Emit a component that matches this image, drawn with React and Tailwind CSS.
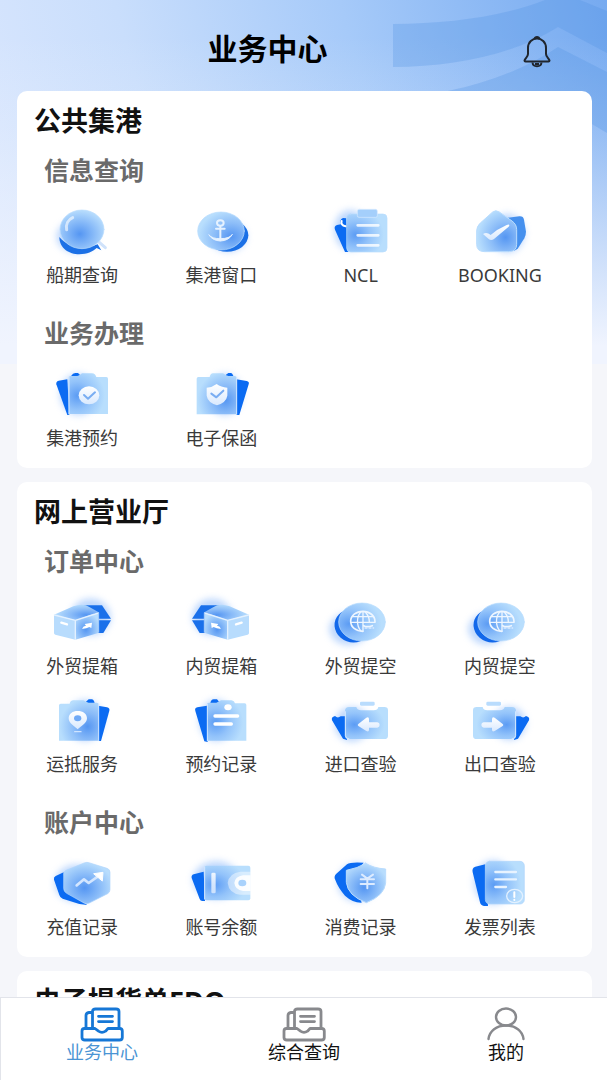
import React from "react";

const DARK = "#0b6bf2";

function Defs() {
  return (
    <svg className="absolute h-0 w-0" aria-hidden="true">
      <defs>
        <radialGradient id="gC" cx="0.45" cy="0.62" r="0.62">
          <stop offset="0" stopColor="#5596f2" />
          <stop offset="0.5" stopColor="#86b9f8" />
          <stop offset="1" stopColor="#b8ddfd" />
        </radialGradient>
        <radialGradient id="gL" cx="0.22" cy="0.55" r="0.7">
          <stop offset="0" stopColor="#5c9cf4" />
          <stop offset="0.5" stopColor="#93c3fa" />
          <stop offset="1" stopColor="#b8defd" />
        </radialGradient>
        <radialGradient id="gR" cx="0.72" cy="0.65" r="0.7">
          <stop offset="0" stopColor="#5596f2" />
          <stop offset="0.5" stopColor="#8bbcf8" />
          <stop offset="1" stopColor="#b8defd" />
        </radialGradient>
        <linearGradient id="gW" x1="0" y1="0" x2="0" y2="1">
          <stop offset="0" stopColor="#ffffff" />
          <stop offset="1" stopColor="#d9e9fe" />
        </linearGradient>
        <filter id="blur" x="-50%" y="-50%" width="200%" height="200%">
          <feGaussianBlur stdDeviation="11" />
        </filter>
      </defs>
    </svg>
  );
}

function Art({ box, glow, children }) {
  return (
    <svg viewBox={box} className="h-16 w-20" fill="none" strokeLinecap="round" strokeLinejoin="round" aria-hidden="true">
      <ellipse cx={glow[0]} cy={glow[1]} rx={glow[2]} ry={glow[3]} fill="#7db0fb" opacity="0.5" filter="url(#blur)" />
      {children}
    </svg>
  );
}

const EDGE = "#d3e8ff";

const Search = () => (
  <Art box="36 15 240 192" glow={[140, 125, 60, 48]}>
    <path d="M88 126C88 160 118 178 148 178C172 177 188 170 200 159L214 166L203 148C160 165 110 155 88 126Z" fill="#1b70e6" />
    <path d="M202 137L226 158" stroke="#cfe2fb" strokeWidth="9" />
    <ellipse cx="156" cy="103" rx="66" ry="58" fill="url(#gC)" stroke="#b9dcfe" strokeWidth="2" />
    <path d="M110 104C107 88 114 74 128 68" stroke="#fff" strokeOpacity="0.6" strokeWidth="9" />
  </Art>
);

const Anchor = () => (
  <Art box="454 15 240 192" glow={[595, 125, 55, 45]}>
    <ellipse cx="592" cy="121" rx="64" ry="49" fill="#1b70e6" />
    <ellipse cx="574" cy="108" rx="70" ry="57" fill="url(#gR)" stroke="#b9dcfe" strokeWidth="2" />
    <g stroke="#e6f2ff" strokeWidth="6">
      <ellipse cx="572" cy="84" rx="10" ry="8" />
      <path d="M572 93V136M559 101H585" />
      <path d="M538 120Q548 137 572 138Q598 137 608 118Q600 131 572 131Q548 132 538 120Z" fill="#e6f2ff" strokeWidth="3" />
    </g>
  </Art>
);

const Clipboard = () => (
  <Art box="32 15 240 192" glow={[120, 105, 48, 60]}>
    <path d="M74 104Q70 94 80 90L92 88Q86 74 98 69L108 70L114 171H104Z" fill={DARK} />
    <path d="M94 78Q90 90 106 94" stroke="#fff" strokeWidth="6" />
    <rect x="109" y="57" width="121" height="114" rx="12" fill="url(#gL)" stroke="#b9dcfe" strokeWidth="2" />
    <rect x="141" y="43" width="60" height="24" rx="5" fill="#a4cffb" stroke="#d9ecff" strokeWidth="2" />
    <path d="M142 91H204M142 121H204M142 151H204" stroke="#fff" strokeOpacity="0.8" strokeWidth="8" />
  </Art>
);

const House = () => (
  <Art box="450 15 240 192" glow={[592, 115, 52, 58]}>
    <path d="M594 68L628 64Q640 63 642 74L648 110Q648 120 643 130L624 160Q616 169 600 169Z" fill="#4590ee" />
    <path d="M548 51Q557 43 568 51L606 78Q620 88 620 104V148Q620 170 596 170H524Q500 170 500 148V108Q500 94 510 85Z" fill="url(#gR)" stroke="#b9dcfe" strokeWidth="3" />
    <path d="M519 117Q530 110 542 120Q562 102 590 90Q602 86 596 95L552 132Q543 139 535 131Z" fill="url(#gW)" />
  </Art>
);

const Reserve = () => (
  <Art box="36 24 240 192" glow={[145, 118, 55, 62]}>
    <path d="M79 88Q77 80 86 77L112 73L118 180H112Z" fill={DARK} />
    <path d="M124 62Q128 54 136 54H144L150 60L144 68H124Z" fill={DARK} />
    <path d="M116 68Q116 63 122 63H142Q150 61 156 55H186Q196 56 199 66H229Q234 66 234 71V177H116Z" fill="url(#gL)" />
    <path d="M117 177V66" stroke={EDGE} strokeWidth="3" />
    <ellipse cx="177" cy="121" rx="31" ry="27" fill="url(#gW)" />
    <path d="M162 120L174 131L195 112" stroke="#79adf2" strokeWidth="6" />
  </Art>
);

const Guarantee = () => (
  <Art box="454 24 240 192" glow={[585, 118, 52, 62]}>
    <path d="M620 73L651 78Q660 80 657 88L629 180H620Z" fill={DARK} />
    <path d="M588 60L596 54H604Q610 56 612 68H590Z" fill={DARK} />
    <path d="M501 71Q501 66 506 66H540Q542 56 550 55H580Q588 62 596 63H615Q621 63 621 68V178H501Z" fill="url(#gR)" />
    <path d="M621 178V68" stroke={EDGE} strokeWidth="3" />
    <path d="M561 87Q574 97 593 98V122Q590 142 562 151Q534 142 531 122V98Q548 97 561 87Z" fill="url(#gW)" />
    <path d="M545 116L560 127L581 107" stroke="#79adf2" strokeWidth="6" />
  </Art>
);

const boxShapes = (
  <>
    <path d="M148 61H216L243 101H206Z" fill="#1a70ea" />
    <path d="M200 106H243L220 144H196Z" fill="#1a70ea" />
    <path d="M72 89L130 64Q160 54 178 66L206 82L136 106Z" fill="url(#gR)" />
    <path d="M72 90L136 106V164L76 149Q72 148 72 144Z" fill="#b8dcfd" />
    <path d="M136 106L206 83V140Q206 144 202 145L136 164Z" fill="url(#gC)" />
    <path d="M73 90L136 106L205 84M136 106V163" stroke="#e3f1ff" strokeWidth="4" />
    <path d="M206 84V142" stroke="#a8cdfb" strokeWidth="3" />
    <path d="M94 113L111 118" stroke="#fff" strokeWidth="7" />
    <path d="M156 131Q160 122 168 122L164 117L186 113L184 129L178 126Q168 132 156 131Z" fill="#fff" />
  </>
);

const BoxOut = () => (
  <Art box="36 18 240 192" glow={[182, 96, 60, 55]}>{boxShapes}</Art>
);

const BoxIn = () => (
  <Art box="454 18 240 192" glow={[548, 96, 60, 55]}>
    <g transform="translate(730 0) scale(-1 1)">{boxShapes}</g>
  </Art>
);

const GlobeArt = () => (
  <Art box="32 18 240 192" glow={[115, 132, 58, 48]}>
    <ellipse cx="126" cy="123" rx="54" ry="49" transform="rotate(20 126 123)" fill="#1268ea" />
    <ellipse cx="155" cy="111" rx="70" ry="57" fill="url(#gL)" stroke="#b9dcfe" strokeWidth="2" />
    <g stroke="#eef6ff" strokeWidth="5">
      <path d="M194 110C194 92 178 79 158 79C137 79 121 92 121 109C121 126 136 139 158 139" />
      <path d="M158 79V138M152 80C138 94 138 124 152 138M164 80C174 90 177 100 177 110M127 95H189M122 112H194" strokeWidth="4" />
      <path d="M160 122Q170 128 186 122" />
    </g>
    <path d="M164 129H190" stroke="#dbeaff" strokeWidth="4" strokeDasharray="6 6" />
  </Art>
);

const Arrive = () => (
  <Art box="36 12 240 192" glow={[165, 106, 55, 62]}>
    <path d="M204 62L231 67Q240 69 238 77L213 168H204Z" fill={DARK} />
    <path d="M168 50L176 43H186Q193 45 194 56H170Z" fill={DARK} />
    <path d="M87 61Q87 56 92 56H119Q122 46 130 46H160Q168 52 176 53H200Q206 53 206 58V167H87Z" fill="url(#gR)" />
    <path d="M206 167V58" stroke={EDGE} strokeWidth="3" />
    <path d="M143 133C132 122 116 115 116 100C116 86 128 78 143 78C159 78 171 86 171 100C171 115 154 122 143 133Z" fill="url(#gW)" />
    <ellipse cx="143" cy="100" rx="11" ry="9" fill="#6fa9f6" />
    <path d="M134 140H153" stroke="#cfe4ff" strokeWidth="4" />
  </Art>
);

const BookLog = () => (
  <Art box="454 12 240 192" glow={[560, 106, 52, 62]}>
    <path d="M532 62L503 67Q494 69 497 78L524 169L534 171Z" fill={DARK} />
    <path d="M542 54Q544 44 552 43H562L568 50L562 58Z" fill={DARK} />
    <path d="M532 58Q532 53 538 53H560Q568 50 574 46H606Q614 47 616 55H645Q650 55 650 60V167H532Z" fill="url(#gL)" />
    <path d="M533 167V58" stroke={EDGE} strokeWidth="3" />
    <ellipse cx="595" cy="67" rx="11" ry="9" fill="#fff" />
    <path d="M556 93H624M556 117H605" stroke="#fff" strokeWidth="10" />
  </Art>
);

const importShapes = (
  <>
    <path d="M65 106Q62 96 74 93Q82 101 91 94H110V165L98 161Z" fill={DARK} />
    <path d="M104 78Q104 66 116 66H138Q141 76 152 76H190Q202 76 204 66H222Q233 66 233 76V152Q233 162 222 162H116Q104 162 104 152Z" fill="url(#gL)" />
    <path d="M105 80V152Q106 161 116 162" stroke="#d9ecff" strokeWidth="3" />
    <rect x="149" y="50" width="44" height="12" rx="4" fill="#b9dcfd" />
    <path d="M144 123Q140 120 144 117L168 98Q176 94 176 103V112H201Q208 113 208 120Q208 127 201 128H176V134Q176 142 168 138Z" fill="url(#gW)" />
  </>
);

const ImportCheck = () => (
  <Art box="32 12 240 192" glow={[125, 118, 52, 52]}>{importShapes}</Art>
);

const ExportCheck = () => (
  <Art box="450 12 240 192" glow={[598, 115, 50, 50]}>
    <g transform="translate(722 0) scale(-1 1)">{importShapes}</g>
  </Art>
);

const Recharge = () => (
  <Art box="36 21 240 192" glow={[140, 115, 66, 56]}>
    <path d="M72 104Q70 97 77 93L101 82L106 138L172 180L148 177L98 161Q90 158 88 150Z" fill={DARK} />
    <path d="M162 54Q171 50 180 54L231 70Q240 73 240 82V134Q240 142 233 146L178 174Q170 178 162 174L110 145Q101 140 101 130V86Q101 79 108 76Z" fill="url(#gC)" stroke="#b0d4fc" strokeWidth="2" />
    <path d="M140 121Q154 110 162 103L176 114L204 94" stroke="#d3e6ff" strokeWidth="8" />
    <path d="M192 86L219 82L217 107Z" fill="#fff" stroke="#fff" strokeWidth="3" />
  </Art>
);

const Wallet = () => (
  <Art box="454 21 240 192" glow={[560, 105, 70, 56]}>
    <path d="M486 99Q484 91 492 88L522 80L526 168H518Q512 168 510 162Z" fill={DARK} />
    <rect x="524" y="62" width="138" height="104" rx="6" fill="url(#gL)" />
    <path d="M525 162V66" stroke={EDGE} strokeWidth="3" />
    <path d="M663 80H632Q598 84 594 114Q598 146 632 149H663Z" fill="#fff" fillOpacity="0.45" />
    <path d="M663 91H640Q616 95 614 114Q616 134 640 138H663Z" fill="#fff" fillOpacity="0.9" />
    <ellipse cx="638" cy="114" rx="12" ry="10" fill="#a8d2fc" />
    <rect x="545" y="83" width="13" height="62" rx="4" fill="url(#gW)" fillOpacity="0.85" />
  </Art>
);

const Spend = () => (
  <Art box="32 21 240 192" glow={[140, 112, 58, 58]}>
    <path d="M74 103Q70 94 78 86L110 58Q120 50 160 53L130 90L154 173Q128 174 104 152Q84 130 74 103Z" fill={DARK} />
    <path d="M166 55Q190 70 226 72V114Q222 152 168 173Q112 152 108 112V76Q142 70 166 55Z" fill="url(#gC)" stroke="#b9dcfe" strokeWidth="3" />
    <path d="M155 89L171 101L188 89M151 103H191M151 117H191M171 102V130" stroke="#dcebff" strokeWidth="6" />
  </Art>
);

const Invoice = () => (
  <Art box="450 21 240 192" glow={[550, 112, 58, 66]}>
    <path d="M488 82Q485 69 496 65L526 58L534 183H522Q512 182 510 172Z" fill={DARK} />
    <rect x="526" y="49" width="117" height="128" rx="13" fill="url(#gL)" stroke="#b0d4fc" strokeWidth="2" />
    <path d="M556 81H618M556 103H618M556 126H588" stroke="#e8f3ff" strokeWidth="7" />
    <ellipse cx="614" cy="153" rx="24" ry="20" stroke="#e3f1ff" strokeWidth="4" />
    <path d="M613 142V156M613 164V165" stroke="#fff" strokeWidth="6" />
  </Art>
);

const SECTIONS = [
  {
    title: "公共集港",
    groups: [
      {
        name: "信息查询",
        items: [
          ["船期查询", Search],
          ["集港窗口", Anchor],
          ["NCL", Clipboard],
          ["BOOKING", House],
        ],
      },
      {
        name: "业务办理",
        items: [
          ["集港预约", Reserve],
          ["电子保函", Guarantee],
        ],
      },
    ],
  },
  {
    title: "网上营业厅",
    groups: [
      {
        name: "订单中心",
        items: [
          ["外贸提箱", BoxOut],
          ["内贸提箱", BoxIn],
          ["外贸提空", GlobeArt],
          ["内贸提空", GlobeArt],
          ["运抵服务", Arrive],
          ["预约记录", BookLog],
          ["进口查验", ImportCheck],
          ["出口查验", ExportCheck],
        ],
      },
      {
        name: "账户中心",
        items: [
          ["充值记录", Recharge],
          ["账号余额", Wallet],
          ["消费记录", Spend],
          ["发票列表", Invoice],
        ],
      },
    ],
  },
  { title: "电子提货单EDO", groups: [] },
];

function Card({ title, groups }) {
  return (
    <section className="rounded-[10px] bg-white pt-[10px] pb-[18px]">
      <h2 className="px-[17px] text-[27px] leading-10 font-bold text-[#111]">{title}</h2>
      <div className="mt-[11px] flex flex-col gap-7">
        {groups.map((g) => (
          <div key={g.name}>
            <h3 className="px-[27px] text-[25px] leading-9 font-bold text-[#6a6a6a]">{g.name}</h3>
            <div className="mt-3 grid grid-cols-4 gap-x-[35px] gap-y-[11px] pr-10 pl-[13px]">
              {g.items.map(([label, Icon]) => (
                <button key={label} type="button" className="flex flex-col items-center">
                  <Icon />
                  <span className="-mt-px text-lg leading-6 whitespace-nowrap text-[#3a3a3a]">{label}</span>
                </button>
              ))}
            </div>
          </div>
        ))}
      </div>
    </section>
  );
}

const TrayIcon = () => (
  <svg viewBox="0 0 44 36" className="h-9 w-11" fill="none" stroke="currentColor" strokeWidth="2.8" strokeLinecap="round" strokeLinejoin="round" aria-hidden="true">
    <path d="M4.500 22.500H15L18.500 25.200Q22 27.500 25.500 25.200L28 22.500H39.500Q42.300 22.500 42.300 25V31.500Q42.300 34 39.500 34H4.800Q2 34 2 31.500V25Q2 22.500 4.500 22.500Z" />
    <path d="M12.500 22V5.500Q12.500 3 15.500 3H36Q39 3 39 5.500V22M12.500 6.500H9Q6 7 6 9.500V22M18.500 10.300H32.500M18.500 15.600H32.500" />
  </svg>
);

const UserIcon = () => (
  <svg viewBox="0 0 44 36" className="h-9 w-11" fill="none" stroke="currentColor" strokeWidth="2.4" strokeLinecap="round" aria-hidden="true">
    <ellipse cx="22" cy="11" rx="10" ry="8.500" />
    <path d="M4.500 33C5.500 25 12.500 19.500 22 19.500C31.500 19.500 38.500 25 39.500 33" />
  </svg>
);

const TABS = [
  ["业务中心", TrayIcon, "text-[#1677d6]", "text-[#4a94d4]"],
  ["综合查询", TrayIcon, "text-[#88898d]", "text-[#111]"],
  ["我的", UserIcon, "text-[#88898d]", "text-[#111]"],
];

export default function App() {
  return (
    <div className="flex h-screen flex-col bg-[#f5f6fa] font-['Noto_Sans','Noto_Sans_CJK_SC',sans-serif]">
      <Defs />
      <div className="relative isolate flex min-h-0 flex-1 flex-col">
        <div className="absolute inset-x-0 top-0 -z-10 h-[364px] bg-[linear-gradient(180deg,rgba(240,244,254,0)_10%,rgba(240,244,254,0.2)_35%,#f0f4fe_95%),linear-gradient(75deg,#dce8fe_0%,#c9defc_30%,#a6caf9_62%,#76aaf0_100%)]">
          <svg viewBox="0 0 607 364" preserveAspectRatio="none" className="h-full w-full" aria-hidden="true">
            <g fill="#4f8fe0" fillOpacity="0.27">
              <path d="M393 24C450 24 505 16 545 0H580L607 11V53L558 27C515 54 455 67 393 67Z" />
              <path d="M448 91C492 82 530 66 558 47L607 72V133L560 105L500 91Z" />
            </g>
          </svg>
        </div>
        <header className="flex h-[91px] shrink-0 items-center pt-[7px] pr-14 pl-3">
          <h1 className="flex-1 text-center text-[30px] leading-10 font-bold text-black">业务中心</h1>
          <button type="button" aria-label="消息通知" className="flex h-[38px] w-7 items-end justify-center">
            <svg viewBox="0 0 28 32" className="h-8 w-7" fill="none" stroke="#20262e" strokeWidth="2" strokeLinejoin="round" aria-hidden="true">
              <path d="M14 2.500C18.500 2.500 23 6 23 12V18C23 21 26 22.500 26.500 24.500Q26.500 25.500 25.500 25.500H2.500Q1.500 25.500 1.500 24.500C2 22.500 5 21 5 18V12C5 6 9.500 2.500 14 2.500Z" />
              <path d="M11.500 3Q12 1 14 1Q16 1 16.500 3M9.500 26.500C10 31.500 18 31.500 18.500 26.500" />
              <path d="M12 28H16" />
            </svg>
          </button>
        </header>
        <main className="flex min-h-0 flex-1 flex-col gap-[14px] overflow-y-auto pr-[15px] pl-[17px] [scrollbar-width:none] *:shrink-0">
          {SECTIONS.map((s) => (
            <Card key={s.title} {...s} />
          ))}
        </main>
      </div>
      <nav className="flex shrink-0 border-t border-l border-[#e2e4ea] bg-white pt-2 pb-4">
        {TABS.map(([label, Icon, iconColor, textColor]) => (
          <a key={label} href="#" className="flex flex-1 flex-col items-center">
            <span className={iconColor}>
              <Icon />
            </span>
            <span className={"-mt-0.5 text-lg leading-6 " + textColor}>{label}</span>
          </a>
        ))}
      </nav>
    </div>
  );
}
